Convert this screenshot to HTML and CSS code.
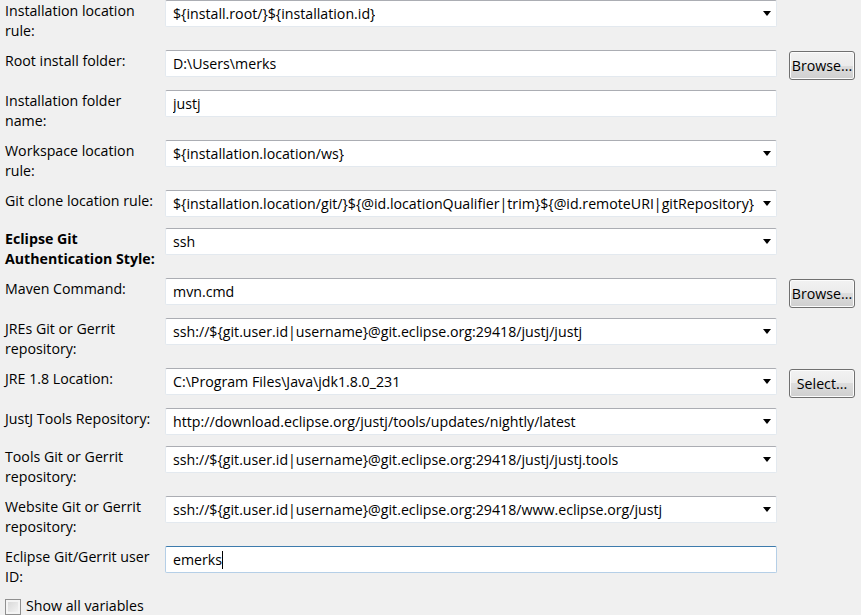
FILE: index.html
```html
<html lang="en">
<head>
  <meta charset="UTF-8">
  <title>Variables</title>
  <link rel="stylesheet" href="styles.css">
</head>
<body>
  <!-- Variable Form -->
  <div class="form">
    <div class="label">Installation location<br>rule:</div>
    <div class="field combo"><span class="value">${install.root/}${installation.id}</span><span class="arrow"></span></div>
    <div></div>

    <div class="label">Root install folder:</div>
    <div class="field"><span class="value">D:\Users\merks</span></div>
    <button class="btn">Browse...</button>

    <div class="label">Installation folder<br>name:</div>
    <div class="field"><span class="value">justj</span></div>
    <div></div>

    <div class="label">Workspace location<br>rule:</div>
    <div class="field combo"><span class="value">${installation.location/ws}</span><span class="arrow"></span></div>
    <div></div>

    <div class="label">Git clone location rule:</div>
    <div class="field combo"><span class="value">${installation.location/git/}${@id.locationQualifier|trim}${@id.remoteURI|gitRepository}</span><span class="arrow"></span></div>
    <div></div>

    <div class="label bold">Eclipse Git<br>Authentication Style:</div>
    <div class="field combo"><span class="value">ssh</span><span class="arrow"></span></div>
    <div></div>

    <div class="label">Maven Command:</div>
    <div class="field"><span class="value">mvn.cmd</span></div>
    <button class="btn">Browse...</button>

    <div class="label">JREs Git or Gerrit<br>repository:</div>
    <div class="field combo"><span class="value">ssh://${git.user.id|username}@git.eclipse.org:29418/justj/justj</span><span class="arrow"></span></div>
    <div></div>

    <div class="label">JRE 1.8 Location:</div>
    <div class="field combo"><span class="value">C:\Program Files\Java\jdk1.8.0_231</span><span class="arrow"></span></div>
    <button class="btn">Select...</button>

    <div class="label">JustJ Tools Repository:</div>
    <div class="field combo"><span class="value">http://download.eclipse.org/justj/tools/updates/nightly/latest</span><span class="arrow"></span></div>
    <div></div>

    <div class="label">Tools Git or Gerrit<br>repository:</div>
    <div class="field combo"><span class="value">ssh://${git.user.id|username}@git.eclipse.org:29418/justj/justj.tools</span><span class="arrow"></span></div>
    <div></div>

    <div class="label">Website Git or Gerrit<br>repository:</div>
    <div class="field combo"><span class="value">ssh://${git.user.id|username}@git.eclipse.org:29418/www.eclipse.org/justj</span><span class="arrow"></span></div>
    <div></div>

    <div class="label">Eclipse Git/Gerrit user<br>ID:</div>
    <div class="field focused"><span class="value">emerks</span><span class="caret"></span></div>
    <div></div>
  </div>

  <!-- Show All Toggle -->
  <label class="check">
    <span class="check-box"></span>
    <span>Show all variables</span>
  </label>
</body>
</html>
```

FILE: styles.css
```css
/* Global Styles */
body {
  margin: 0;
  padding: 0 5px;
  background-color: #f0f0f0;
  color: #000;
  font-family: 'Open Sans', 'Noto Sans', sans-serif;
  font-size: 14.2px;
  line-height: 20px;
}

/* Form Grid */
.form {
  display: grid;
  grid-template-columns: 160px 612px 78px;
  row-gap: 10px;
  align-items: start;
}

.label {
  white-space: nowrap;
  padding-top: 1px;
  margin-bottom: -1px;
}
.label.bold {
  font-weight: bold;
}

/* Text Fields and Combos */
.field {
  display: flex;
  align-items: center;
  box-sizing: border-box;
  height: 27px;
  margin-bottom: 1px;
  padding: 0 5px 0 7px;
  background-color: #fff;
  border: 1px solid #e3e9ef;
  border-top-color: #abadb3;
  border-radius: 2px;
  white-space: nowrap;
  overflow: hidden;
}
.field .value {
  overflow: hidden;
}
.combo {
  justify-content: space-between;
}
.combo .arrow {
  flex: none;
  width: 0;
  height: 0;
  margin-left: 8px;
  border-left: 4px solid transparent;
  border-right: 4px solid transparent;
  border-top: 5px solid #000;
}
.field.focused {
  border-color: #b5cfe7;
  border-top-color: #3d7bad;
}
.caret {
  width: 0;
  height: 18px;
  border-left: 1px solid #000;
}

/* Buttons */
.btn {
  justify-self: end;
  box-sizing: border-box;
  width: 66px;
  height: 29px;
  margin-top: 1px;
  padding: 0;
  font: inherit;
  color: #000;
  border: 1px solid #707070;
  border-radius: 3px;
  background: linear-gradient(#f2f2f2 0%, #ebebeb 50%, #dddddd 50%, #cfcfcf 100%);
  box-shadow: inset 0 0 0 1px #fcfcfc;
}

/* Checkbox */
.check {
  display: flex;
  align-items: center;
  gap: 5px;
  margin-top: 10px;
}
.check-box {
  box-sizing: border-box;
  width: 16px;
  height: 16px;
  margin-top: 2px;
  border: 1px solid #8f8f8f;
  background: linear-gradient(135deg, #d4d4d4, #f7f7f7);
  box-shadow: inset 0 0 0 2px #f4f4f4;
}
```
